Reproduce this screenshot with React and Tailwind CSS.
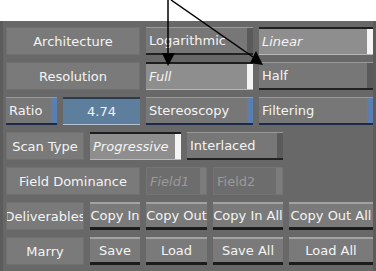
import React from 'react';

const base = 'h-[28px] flex items-center text-[13px] leading-none box-border shrink-0 overflow-hidden whitespace-nowrap';

const styles = {
  label: 'bg-[#7a7a7a] border border-[#707070] justify-center text-[#f4f4f4]',
  action: 'bg-[#7a7a7a] border-t-2 border-t-[#a3a3a3] border-b-[3px] border-b-[#1c1c1c] justify-center text-[#f4f4f4]',
  off: 'bg-[#777777] border-t border-t-[#999999] border-b-2 border-b-[#222222] text-[#f4f4f4]',
  on: 'bg-[#8e8e8e] border-t-2 border-t-[#1e1e1e] border-b border-b-[#b8b8b8] italic text-[#f4f4f4]',
  blue: 'bg-[#777777] border-t border-t-[#999999] border-b-2 border-b-[#1d2a4a] text-[#f4f4f4]',
  field: 'bg-[#5e7e9e] border-t-2 border-t-[#2b3b4b] border-b border-b-[#b3c3d3] justify-center text-[#f4f4f4]',
  dim: 'bg-[#6d6d6d] border border-[#747474] text-[#9a9a9a]',
};

const strips = {
  off: 'bg-[#5a5a5a]',
  on: 'bg-[#f4f4f4]',
  blue: 'bg-[#5a7eae]',
  dim: 'bg-[#7c7c7c]',
};

function Btn({ w, kind = 'action', italic, children }) {
  const strip = strips[kind];
  return (
    <div className={`${base} ${styles[kind]} ${italic ? 'italic' : ''} ${w}`}>
      {strip ? (
        <>
          <span className="flex-1 pl-[3px]">{children}</span>
          <span className={`w-[6px] h-full ${strip}`} />
        </>
      ) : (
        children
      )}
    </div>
  );
}

export default function App() {
  return (
    <div className="relative w-[376px] h-[271px] bg-white flex flex-col" style={{ fontFamily: '"DejaVu Sans", sans-serif' }}>
      <div className="h-[21px] bg-white" />
      <div className="flex-1 bg-[#686868] border-l-[3px] border-l-[#5c5c5c] border-r-[3px] border-r-[#5c5c5c] pl-[3px] pt-[6px] flex flex-col gap-[7px]">
        <div className="flex gap-[6px]">
          <Btn w="w-[134px]" kind="label">Architecture</Btn>
          <Btn w="w-[107px]" kind="off">Logarithmic</Btn>
          <Btn w="w-[114px]" kind="on">Linear</Btn>
        </div>
        <div className="flex gap-[6px]">
          <Btn w="w-[134px]" kind="label">Resolution</Btn>
          <Btn w="w-[107px]" kind="on">Full</Btn>
          <Btn w="w-[114px]" kind="off">Half</Btn>
        </div>
        <div className="flex gap-[6px]">
          <Btn w="w-[51px]" kind="blue">Ratio</Btn>
          <Btn w="w-[77px]" kind="field">4.74</Btn>
          <Btn w="w-[107px]" kind="blue">Stereoscopy</Btn>
          <Btn w="w-[114px]" kind="blue">Filtering</Btn>
        </div>
        <div className="flex gap-[6px]">
          <Btn w="w-[78px]" kind="label">Scan Type</Btn>
          <Btn w="w-[91px]" kind="on">Progressive</Btn>
          <Btn w="w-[96px]" kind="off">Interlaced</Btn>
        </div>
        <div className="flex gap-[6px]">
          <Btn w="w-[134px]" kind="label">Field Dominance</Btn>
          <Btn w="w-[61px]" kind="dim" italic>Field1</Btn>
          <Btn w="w-[70px]" kind="dim">Field2</Btn>
        </div>
        <div className="flex gap-[6px]">
          <Btn w="w-[78px]" kind="label">Deliverables</Btn>
          <Btn w="w-[50px]">Copy In</Btn>
          <Btn w="w-[61px]">Copy Out</Btn>
          <Btn w="w-[70px]">Copy In All</Btn>
          <Btn w="w-[84px]">Copy Out All</Btn>
        </div>
        <div className="flex gap-[6px]">
          <Btn w="w-[78px]" kind="label">Marry</Btn>
          <Btn w="w-[50px]">Save</Btn>
          <Btn w="w-[61px]">Load</Btn>
          <Btn w="w-[70px]">Save All</Btn>
          <Btn w="w-[84px]">Load All</Btn>
        </div>
      </div>
      <svg className="absolute inset-0 pointer-events-none" width="376" height="271" viewBox="0 0 376 271">
        <line x1="168" y1="0" x2="168" y2="54" stroke="#000" strokeWidth="1.5" />
        <polygon points="162,53 175,53 168,66" fill="#000" />
        <line x1="171" y1="0" x2="253" y2="57" stroke="#000" strokeWidth="1.5" />
        <polygon points="256,51 250,63 263,65" fill="#000" />
      </svg>
    </div>
  );
}
